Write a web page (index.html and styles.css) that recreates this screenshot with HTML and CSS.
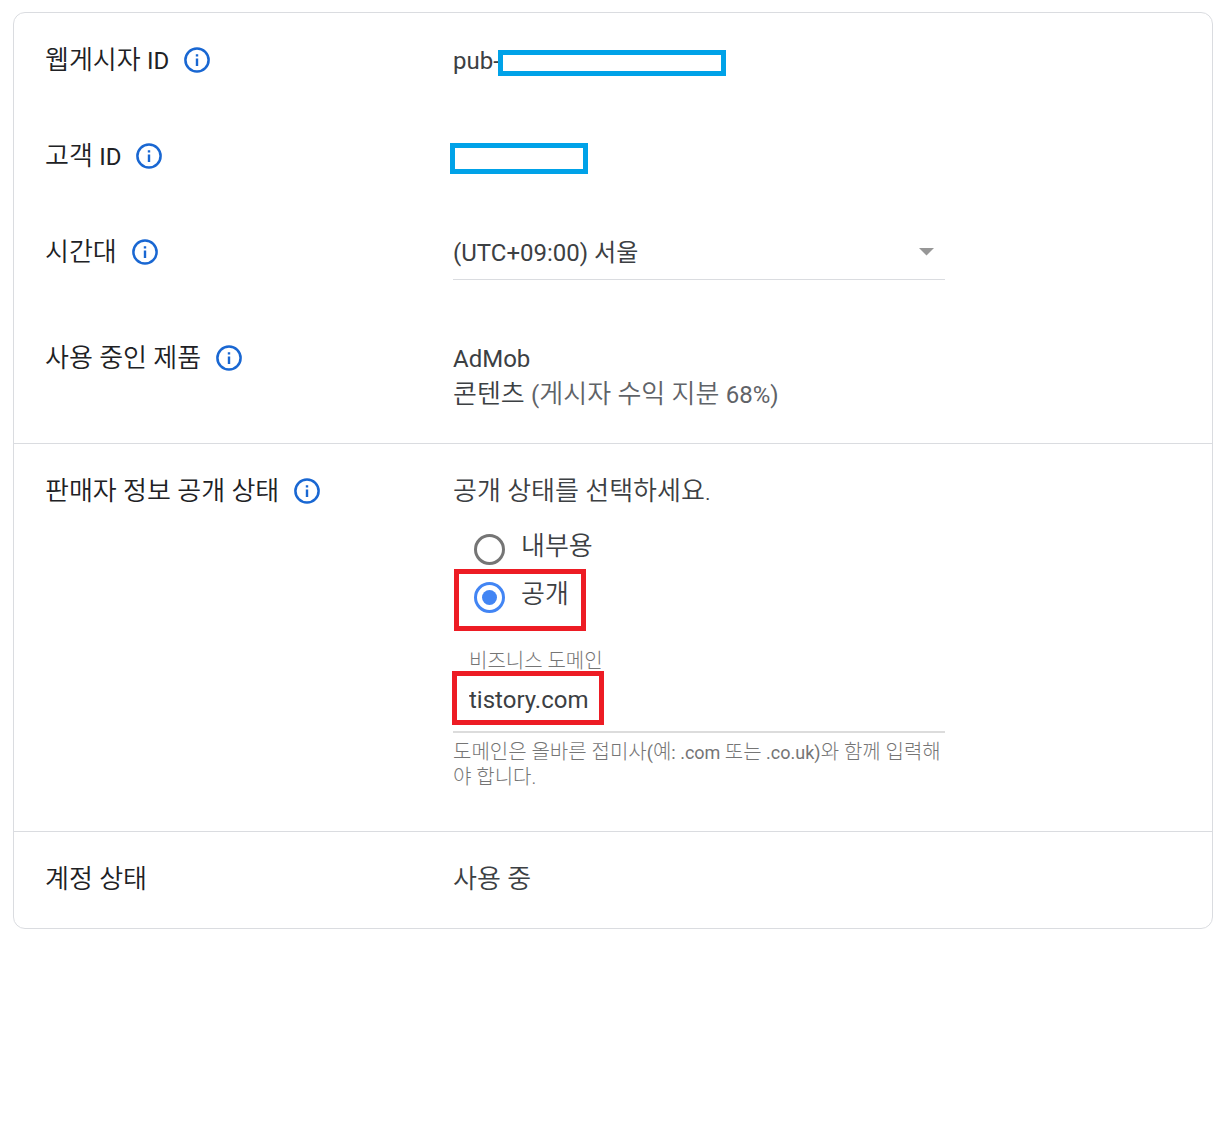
FILE: index.html
```html
<!DOCTYPE html>
<html lang="ko">
<head>
    <meta charset="UTF-8">
    <meta name="viewport" content="width=device-width, initial-scale=1.0">
    <title>계정 정보</title>
    <link rel="stylesheet" href="styles.css">
</head>
<body>
    <svg class="sprite" width="0" height="0" aria-hidden="true">
        <symbol id="info" viewBox="0 0 26 26">
            <circle cx="13" cy="13" r="11.6" fill="none" stroke="currentColor" stroke-width="2.5"/>
            <path d="M11.8 7.2h2.4v2.4h-2.4zM11.8 11.6h2.4v7.4h-2.4z" fill="currentColor"/>
        </symbol>
    </svg>

    <main class="card">
        <section class="section">
            <div class="row">
                <div class="label">
                    <span>웹게시자 <span class="latin">ID</span></span>
                    <button type="button" class="info" aria-label="도움말"><svg><use href="#info"/></svg></button>
                </div>
                <div class="value">
                    <span class="latin">pub-</span>
                    <div class="mask mask-publisher"></div>
                </div>
            </div>
            <div class="row">
                <div class="label">
                    <span>고객 <span class="latin">ID</span></span>
                    <button type="button" class="info" aria-label="도움말"><svg><use href="#info"/></svg></button>
                </div>
                <div class="value">
                    <div class="mask mask-customer"></div>
                </div>
            </div>
            <div class="row">
                <div class="label">
                    <label for="timezone">시간대</label>
                    <button type="button" class="info" aria-label="도움말"><svg><use href="#info"/></svg></button>
                </div>
                <div class="value select">
                    <select id="timezone">
                        <option>(UTC+09:00) 서울</option>
                    </select>
                    <svg class="arrow" viewBox="0 0 15 8"><path d="M0 0h15L7.5 7.5z" fill="#979797"/></svg>
                </div>
            </div>
            <div class="row">
                <div class="label">
                    <span>사용 중인 제품</span>
                    <button type="button" class="info" aria-label="도움말"><svg><use href="#info"/></svg></button>
                </div>
                <div class="value">
                    <div><span class="latin">AdMob</span></div>
                    <div>콘텐츠 <span class="share"><span class="latin">(</span>게시자 수익 지분 <span class="latin">68%)</span></span></div>
                </div>
            </div>
        </section>

        <section class="section">
            <div class="row">
                <div class="label">
                    <span>판매자 정보 공개 상태</span>
                    <button type="button" class="info" aria-label="도움말"><svg><use href="#info"/></svg></button>
                </div>
                <div class="value">
                    <div id="visibility">공개 상태를 선택하세요.</div>
                    <div class="radios" role="radiogroup" aria-labelledby="visibility">
                        <label class="radio">
                            <input type="radio" name="visibility">
                            <span>내부용</span>
                        </label>
                        <label class="radio">
                            <input type="radio" name="visibility" checked>
                            <span>공개</span>
                            <i class="mark mark-radio"></i>
                        </label>
                    </div>
                    <div class="field">
                        <label for="domain">비즈니스 도메인</label>
                        <div class="field-box">
                            <input id="domain" type="text" value="tistory.com" aria-describedby="hint">
                            <i class="mark mark-domain"></i>
                        </div>
                        <p id="hint" class="hint">도메인은 올바른 접미사<span class="latin">(</span>예<span class="latin">: .com </span>또는<span class="latin"> .co.uk)</span>와 함께 입력해야 합니다.</p>
                    </div>
                </div>
            </div>
        </section>

        <section class="section">
            <div class="row">
                <div class="label">
                    <span>계정 상태</span>
                </div>
                <div class="value">사용 중</div>
            </div>
        </section>
    </main>
</body>
</html>
```
FILE: styles.css
```css
* {
    box-sizing: border-box;
}

body {
    margin: 12px 13px;
    background: #fff;
    color: #3c4043;
    font-family: Roboto, "Noto Sans CJK KR", sans-serif;
    font-size: 26px;
    font-weight: 350;
    line-height: 36px;
}

.sprite {
    position: absolute;
}

.card {
    border: 1px solid #dadce0;
    border-radius: 12px;
}

.section {
    display: flex;
    flex-direction: column;
    gap: 60px;
    padding: 29px 31px 31px;
}

.section + .section {
    border-top: 1px solid #dadce0;
}

.row {
    display: grid;
    grid-template-columns: 408px minmax(0, 492px);
}

.label {
    display: flex;
    align-items: center;
    gap: 15px;
    height: 36px;
    color: #202124;
}

.value {
    position: relative;
}

.latin {
    font-size: 24px;
    font-weight: 400;
    line-height: 24px;
}

.share {
    color: #5f6368;
}

.info {
    width: 26px;
    height: 26px;
    padding: 0;
    border: none;
    background: none;
    color: #1967d2;
    cursor: pointer;
}

.info svg {
    display: block;
    width: 26px;
    height: 26px;
}

/* Boxes that cover the private ids */
.mask {
    position: absolute;
    border: 5px solid #00a2e8;
    background: #fff;
}

.mask-publisher {
    top: 8px;
    left: 45px;
    width: 228px;
    height: 26px;
}

.mask-customer {
    top: 5px;
    left: -3px;
    width: 138px;
    height: 31px;
}

.select select {
    display: block;
    width: 100%;
    height: 46px;
    padding: 0 40px 8px 0;
    border: none;
    border-bottom: 1px solid #dadce0;
    border-radius: 0;
    background: none;
    color: inherit;
    font-family: inherit;
    font-size: 24px;
    line-height: 36px;
    appearance: none;
}

.arrow {
    position: absolute;
    top: 14px;
    right: 11px;
    width: 15px;
    height: 8px;
    pointer-events: none;
}

.radios {
    margin-top: 16px;
    padding-left: 21px;
}

.radio {
    position: relative;
    display: flex;
    align-items: center;
    gap: 16px;
    height: 48px;
}

.radio span {
    padding-bottom: 6px;
}

.radio input {
    display: grid;
    place-items: center;
    width: 31px;
    height: 31px;
    margin: 0;
    border: 3px solid #757575;
    border-radius: 50%;
    appearance: none;
}

.radio input:checked {
    border-color: #4285f4;
}

.radio input:checked::before {
    content: "";
    width: 15px;
    height: 15px;
    border-radius: 50%;
    background: #4285f4;
}

/* Red highlight frames */
.mark {
    position: absolute;
    border: 5px solid #ed1c24;
    pointer-events: none;
}

.mark-radio {
    top: -4px;
    left: -20px;
    width: 132px;
    height: 62px;
}

.mark-domain {
    top: -2px;
    left: -1px;
    width: 152px;
    height: 54px;
}

.field {
    margin: 28px 0 10px;
    color: #757575;
    font-size: 20px;
    font-weight: 300;
    line-height: 24px;
}

.field label {
    display: block;
    padding-left: 16px;
}

.field-box {
    position: relative;
}

.field input {
    display: block;
    width: 100%;
    height: 60px;
    padding: 9px 16px 13px;
    border: none;
    border-bottom: 2px solid #dcdcdc;
    background: none;
    color: #3c4043;
    font-family: inherit;
    font-size: 24px;
}

.hint {
    margin: 7px 0 0;
    line-height: 25px;
    word-break: break-all;
}

.hint .latin {
    font-size: 18px;
    line-height: 18px;
}
```
